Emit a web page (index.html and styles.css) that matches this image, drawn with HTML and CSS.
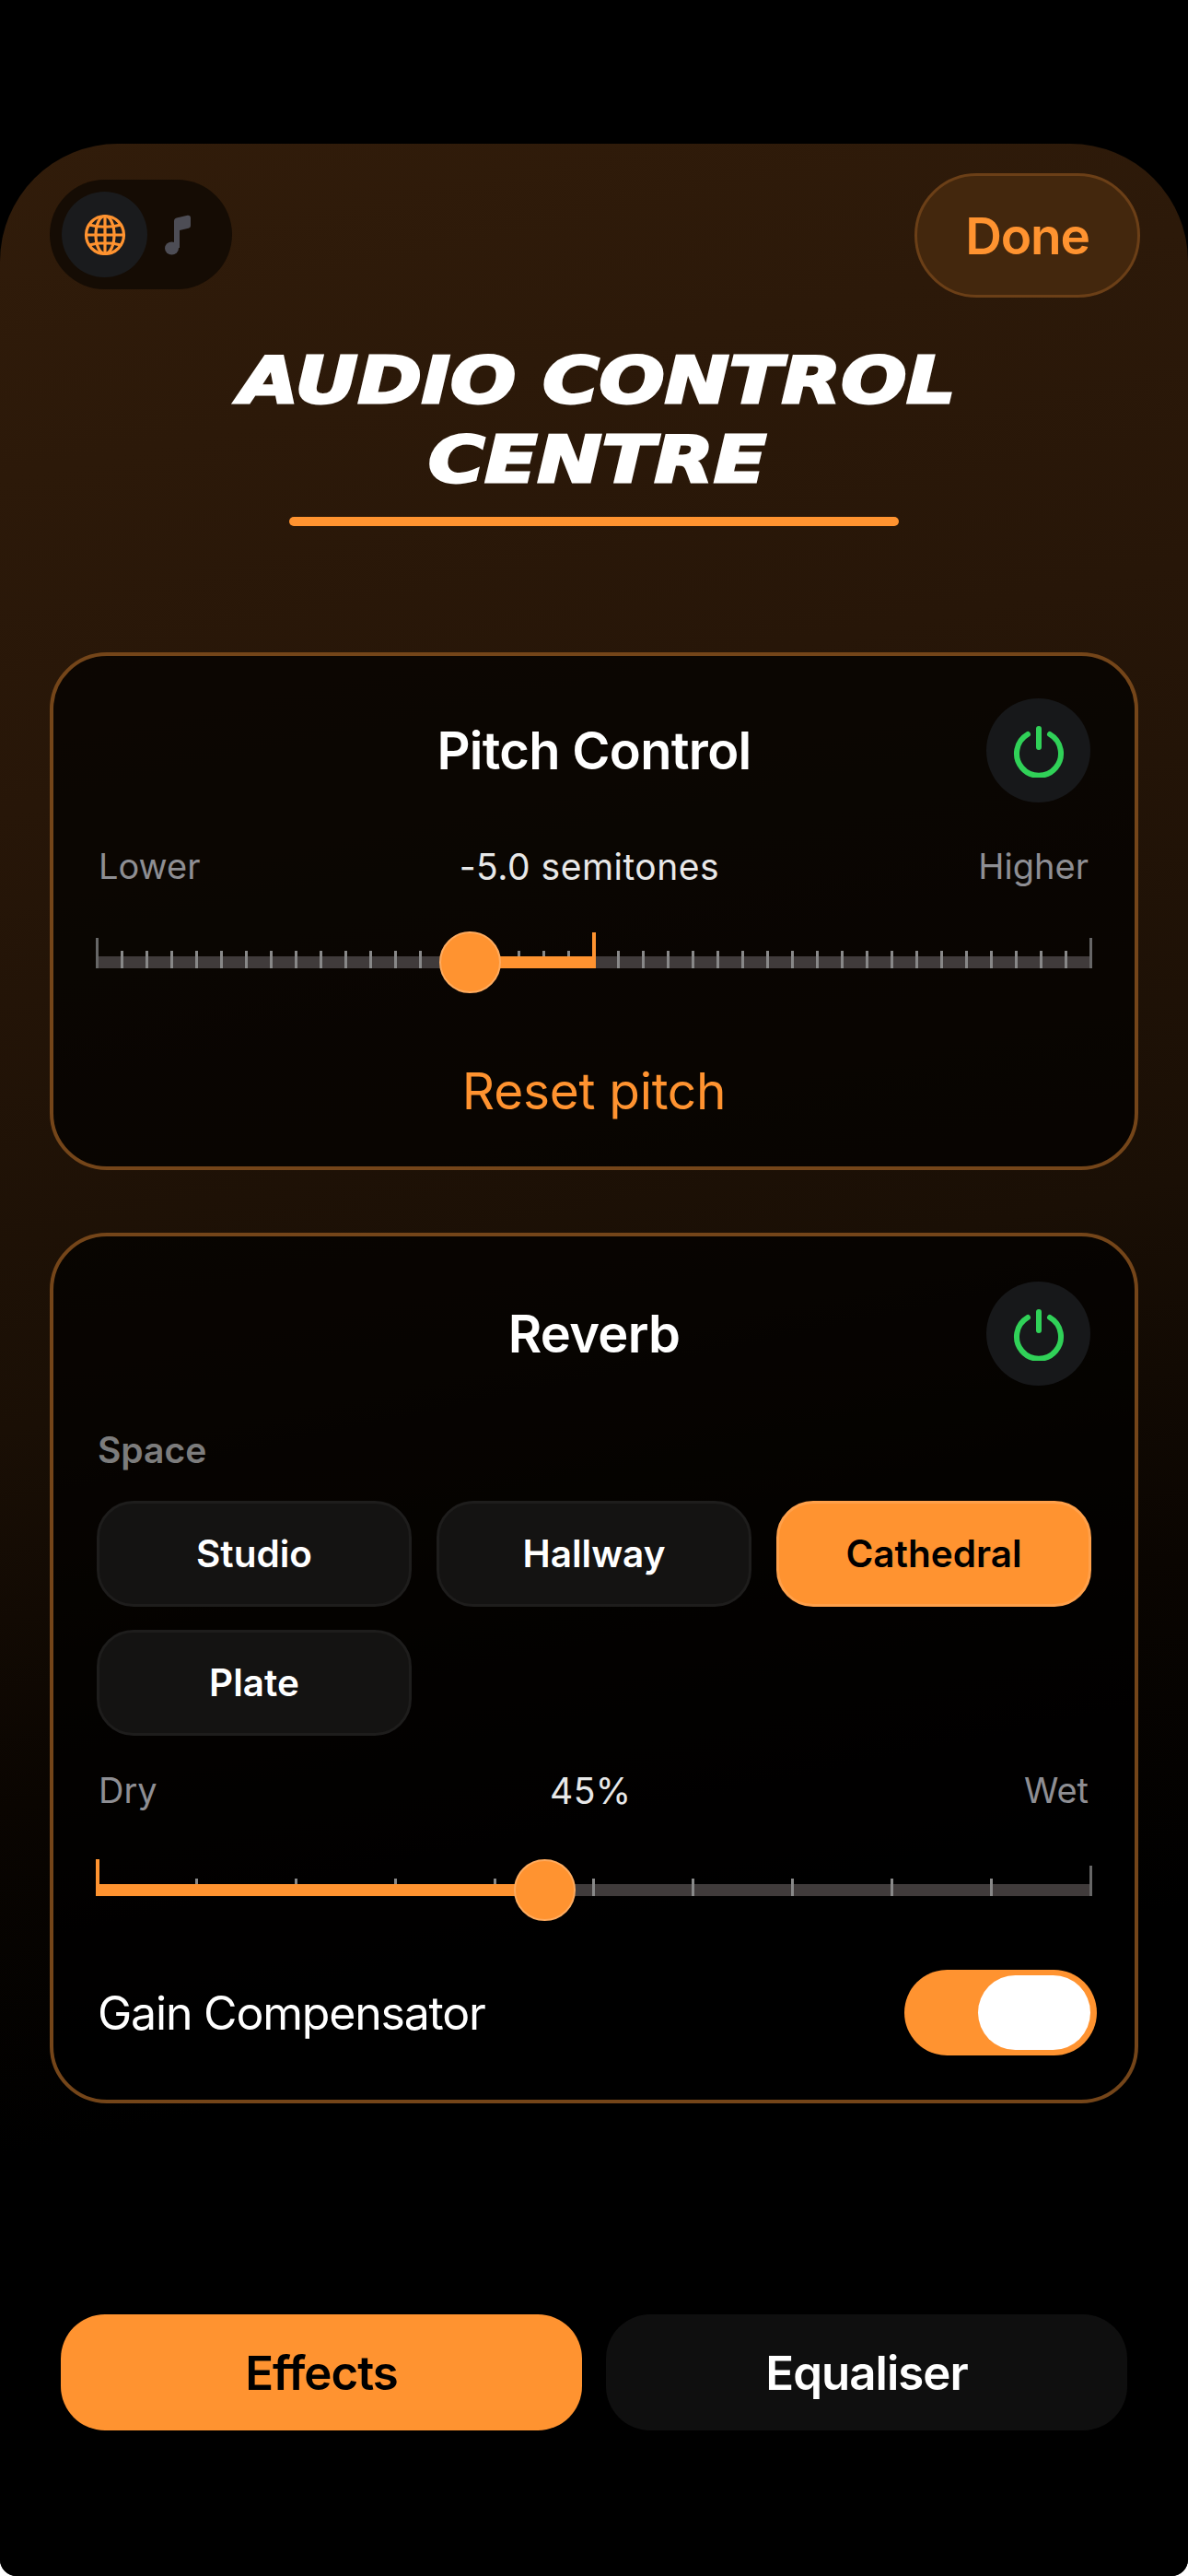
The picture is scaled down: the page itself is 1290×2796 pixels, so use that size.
FILE: index.html
```html
<!DOCTYPE html>
<html>
<head>
	<title>Audio Control Centre</title>
	<link rel="stylesheet" href="styles.css">
</head>
<body>
<div class="sheet">
	<div class="top-bar">
		<div class="mode-pill">
			<span class="mode-btn active">
				<svg width="46" height="46" viewBox="0 0 46 46" fill="none" stroke="#ff9330" stroke-width="3.200">
					<circle cx="23" cy="23" r="20.5"/>
					<ellipse cx="23" cy="23" rx="10" ry="20.5"/>
					<path d="M23 2.500v41M2.500 23h41M6 12c10 3 24 3 34 0M6 34c10-3 24-3 34 0"/>
				</svg>
			</span>
			<span class="mode-note">
				<svg width="28" height="44" viewBox="0 0 28 44" fill="#4d4d55">
					<ellipse cx="7.500" cy="36.500" rx="7.500" ry="7"/>
					<path d="M10 36V7c0-2 1-3.200 2.800-3.600L24.500.8C26.500.4 28 1.400 28 3.200v8.600c0 1.600-.8 2.500-2.400 2.900L16 17v19z"/>
				</svg>
			</span>
		</div>
		<div class="done-btn">Done</div>
	</div>

	<div class="title-wrap">
		<h1 class="title">AUDIO CONTROL<br>CENTRE</h1>
		<div class="title-line"></div>
	</div>

	<div class="card pitch-card">
		<div class="card-head">
			<h2>Pitch Control</h2>
			<span class="power">
				<svg width="56" height="58" viewBox="0 0 56 58" fill="none" stroke="#30d158" stroke-width="6" stroke-linecap="round">
					<path d="M28 5v20M16 11a24 24 0 1 0 24 0"/>
				</svg>
			</span>
		</div>
		<div class="range-labels">
			<span class="dim">Lower</span>
			<span class="value">-5.0 semitones</span>
			<span class="dim">Higher</span>
		</div>
		<div class="slider">
			<div class="track"></div>
			<div class="ticks fine">
				<i class="edge"></i><i></i><i></i><i></i><i></i><i></i><i></i><i></i><i></i><i></i><i></i>
				<i></i><i></i><i></i><i></i><i></i><i></i><i></i><i></i><i></i><i></i>
				<i></i><i></i><i></i><i></i><i></i><i></i><i></i><i></i><i></i><i></i>
				<i></i><i></i><i></i><i></i><i></i><i></i><i></i><i></i><i></i><i class="edge"></i>
			</div>
			<div class="fill pitch-fill"></div>
			<div class="thumb pitch-thumb"></div>
		</div>
		<div class="reset">Reset pitch</div>
	</div>

	<div class="card reverb-card">
		<div class="card-head">
			<h2>Reverb</h2>
			<span class="power">
				<svg width="56" height="58" viewBox="0 0 56 58" fill="none" stroke="#30d158" stroke-width="6" stroke-linecap="round">
					<path d="M28 5v20M16 11a24 24 0 1 0 24 0"/>
				</svg>
			</span>
		</div>
		<div class="space-label">Space</div>
		<div class="chips">
			<div class="chip">Studio</div>
			<div class="chip">Hallway</div>
			<div class="chip on">Cathedral</div>
			<div class="chip">Plate</div>
		</div>
		<div class="range-labels wet-labels">
			<span class="dim">Dry</span>
			<span class="value">45%</span>
			<span class="dim">Wet</span>
		</div>
		<div class="slider wet-slider">
			<div class="track"></div>
			<div class="ticks coarse">
				<i class="edge"></i><i></i><i></i><i></i><i></i><i></i><i></i><i></i><i></i><i></i><i class="edge"></i>
			</div>
			<div class="fill wet-fill"></div>
			<div class="thumb wet-thumb"></div>
		</div>
		<div class="gain-row">
			<span>Gain Compensator</span>
			<span class="toggle"><span class="knob"></span></span>
		</div>
	</div>

	<div class="tabs">
		<div class="tab on">Effects</div>
		<div class="tab">Equaliser</div>
	</div>
</div>
</body>
</html>
```
FILE: styles.css
```css
*{
	padding: 0;
	margin: 0;
	box-sizing: border-box;
}
html{
	background: #fff;
}
body{
	width: 1290px;
	height: 2796px;
	padding-top: 156px;
	border-radius: 0 0 18px 18px;
	background: #000;
	font-family: Inter, "Liberation Sans", sans-serif;
	color: #fff;
	overflow: hidden;
}
.sheet{
	height: 2640px;
	padding: 32px 54px 0;
	border-radius: 128px 128px 0 0;
	background: linear-gradient(168deg, #311c0a 0%, #271608 25%, #1a0f05 48%, #0a0501 62%, #000 75%);
}

/* top bar */
.top-bar{
	display: flex;
	justify-content: space-between;
	align-items: flex-start;
}
.mode-pill{
	width: 198px;
	height: 119px;
	margin-top: 7px;
	padding: 13px;
	display: flex;
	align-items: center;
	gap: 19px;
	border-radius: 60px;
	background: #150c04;
}
.mode-btn{
	width: 93px;
	height: 93px;
	display: flex;
	align-items: center;
	justify-content: center;
	border-radius: 50%;
	background: #1a1b1d;
}
.mode-note{
	display: flex;
}
.done-btn{
	width: 245px;
	height: 135px;
	margin-right: -2px;
	display: flex;
	align-items: center;
	justify-content: center;
	border: 3px solid #6b3f17;
	border-radius: 68px;
	background: #43270d;
	color: #ff9330;
	font-size: 55px;
	font-weight: 600;
	letter-spacing: -1.2px;
}

/* title */
.title-wrap{
	margin-top: 47px;
	display: flex;
	flex-direction: column;
	align-items: center;
}
.title{
	font-family: "DejaVu Sans", sans-serif;
	font-size: 70px;
	font-weight: bold;
	font-style: italic;
	line-height: 86px;
	text-align: center;
	-webkit-text-stroke: 3px #fff;
	transform: translateX(4px) scaleX(1.195);
}
.title-line{
	width: 662px;
	height: 10px;
	margin-top: 19px;
	border-radius: 5px;
	background: #ff9330;
}

/* cards */
.card{
	border: 4px solid #744519;
	border-radius: 62px;
	padding: 46px 47px 0;
	background: rgba(0,0,0,.7);
}
.pitch-card{
	height: 562px;
	margin-top: 137px;
}
.reverb-card{
	height: 945px;
	margin-top: 68px;
	padding-top: 49px;
}
.card-head{
	height: 113px;
	display: flex;
	align-items: center;
	justify-content: center;
	position: relative;
}
.card-head h2{
	font-size: 56px;
	font-weight: 600;
	letter-spacing: -.7px;
}
.power{
	position: absolute;
	right: 1px;
	top: 0;
	width: 113px;
	height: 113px;
	display: flex;
	align-items: center;
	justify-content: center;
	border-radius: 50%;
	background: #17181a;
}
.range-labels{
	margin: 45px 3px 0 2px;
	display: flex;
	justify-content: space-between;
	align-items: center;
	height: 48px;
	font-size: 38px;
}
.dim{
	color: #8e8e93;
}
.value{
	color: #e8e8e8;
	font-size: 39px;
	letter-spacing: .5px;
}

/* sliders */
.slider{
	position: relative;
	width: 1082px;
	height: 67px;
	margin: 47px 0 0 -1px;
}
.wet-slider{
	margin-top: 51px;
}
.track{
	position: absolute;
	left: 0;
	right: 0;
	top: 27px;
	height: 13px;
	border-radius: 4px;
	background: #403b3b;
}
.ticks{
	position: absolute;
	left: 0;
	right: 0;
	top: 0;
	height: 40px;
	display: flex;
	justify-content: space-between;
	align-items: flex-end;
}
.ticks i{
	display: block;
	width: 3px;
	height: 19px;
	background: #888;
}
.ticks i.edge{
	height: 33px;
	background: #666;
}
.fill{
	position: absolute;
	height: 13px;
	top: 27px;
	background: #ff9330;
}
.thumb{
	position: absolute;
	top: 0;
	width: 67px;
	height: 67px;
	border-radius: 50%;
	border: 2px solid #ffab5e;
	background: #ff9330;
}
.pitch-fill{
	left: 407px;
	width: 136px;
}
.pitch-fill:after{
	content: "";
	position: absolute;
	right: 0;
	bottom: 0;
	width: 4px;
	height: 39px;
	background: #ff9330;
}
.pitch-thumb{
	left: 373px;
}
.wet-fill{
	left: 0;
	width: 487px;
}
.wet-fill:after{
	content: "";
	position: absolute;
	left: 0;
	bottom: 0;
	width: 4px;
	height: 40px;
	background: #ff9330;
}
.wet-thumb{
	left: 454px;
}
.reset{
	margin-top: 73px;
	text-align: center;
	color: #ff9330;
	font-size: 55px;
	letter-spacing: -.3px;
}

/* reverb */
.space-label{
	margin: 46px 0 0 1px;
	font-size: 39px;
	font-weight: 600;
	color: #7c7c7c;
}
.chips{
	margin-top: 32px;
	display: grid;
	grid-template-columns: repeat(3, 1fr);
	gap: 25px 27px;
}
.chip{
	height: 115px;
	display: flex;
	align-items: center;
	justify-content: center;
	border: 3px solid #1e1d1c;
	border-radius: 40px;
	background: #141312;
	font-size: 40.5px;
	font-weight: 600;
}
.chip.on{
	border-color: #ffa04a;
	background: #ff9330;
	color: #000;
}
.wet-labels{
	margin-top: 35px;
}
.gain-row{
	margin: 53px 0 0 1px;
	display: flex;
	justify-content: space-between;
	align-items: center;
	font-size: 50px;
	letter-spacing: -1.2px;
}
.toggle{
	width: 209px;
	height: 93px;
	margin-right: -6px;
	padding: 6px 7px;
	display: flex;
	justify-content: flex-end;
	border-radius: 47px;
	background: #ff9330;
}
.knob{
	width: 122px;
	height: 81px;
	border-radius: 41px;
	background: #fff;
}

/* bottom tabs */
.tabs{
	margin: 229px 12px 0;
	display: flex;
	gap: 26px;
}
.tab{
	flex: 1;
	height: 126px;
	display: flex;
	align-items: center;
	justify-content: center;
	border-radius: 48px;
	background: #0f0f0f;
	font-size: 51px;
	font-weight: 600;
	letter-spacing: -1px;
}
.tab.on{
	background: #ff9330;
	color: #000;
}
```
